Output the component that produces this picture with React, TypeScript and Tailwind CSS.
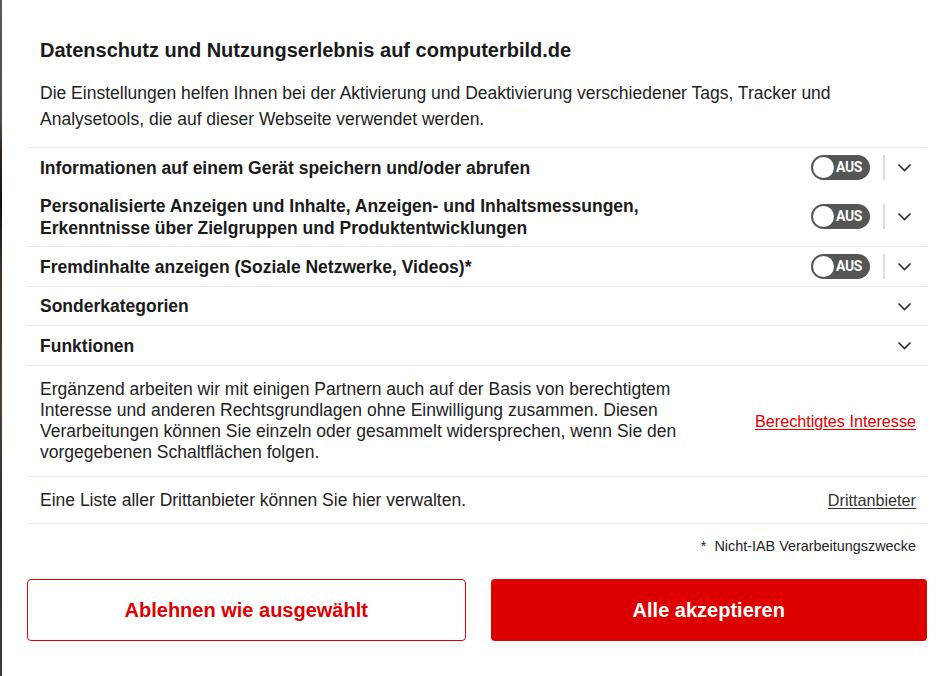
import React from 'react'

const Chevron = () => (
   <svg width="15" height="9" viewBox="0 0 15 9" fill="none">
      <path d="M1.5 1.5l6 6 6-6" stroke="#2a2a2a" strokeWidth="1.6" />
   </svg>
)

const Toggle = () => (
   <div className="flex items-center">
      <div className="relative w-[59px] h-[25px] rounded-full bg-[#555555]">
         <span className="absolute left-[2px] top-[2px] w-[21px] h-[21px] rounded-full bg-white"></span>
         <span className="absolute left-[25px] top-0 h-[25px] leading-[25px] text-[14px] tracking-[-0.4px] font-bold text-white font-['Roboto',sans-serif]">AUS</span>
      </div>
      <div className="w-[2px] h-[25px] bg-[#dddddd] ml-[13px] mr-[12px]"></div>
   </div>
)

const Row = ({ label, toggle, cls }: { label: React.ReactNode, toggle?: boolean, cls: string }) => {
   return (
      <div className={'flex items-center justify-between pl-[13px] pr-[15px] ' + cls}>
         <p className="text-[17.5px] leading-[22px] font-bold text-[#1a1a1a]">{label}</p>
         <div className="flex items-center">
            {toggle && <Toggle />}
            <Chevron />
         </div>
      </div>
   )
}

export default function App() {
   return (
      <div className="flex w-[949px] h-[676px] bg-white overflow-hidden font-['Liberation_Sans',Arial,sans-serif]">
         <div className="w-[2px] h-full bg-[linear-gradient(180deg,#5a5a5a_0%,#4a4a4a_18%,#3a2418_22%,#111_30%,#3d3426_40%,#4a4232_60%,#2f2f2f_75%,#3a3a3a_100%)]"></div>
         <div className="flex-1 flex flex-col pl-[25px] pr-[22px]">
            <div className="px-[13px] pt-[38px]">
               <h1 className="text-[20px] leading-[24px] font-bold text-[#1a1a1a]">Datenschutz und Nutzungserlebnis auf computerbild.de</h1>
               <p className="mt-[18px] text-[17.5px] leading-[26px] text-[#222222]">
                  Die Einstellungen helfen Ihnen bei der Aktivierung und Deaktivierung verschiedener Tags, Tracker und Analysetools, die auf dieser Webseite verwendet werden.
               </p>
            </div>
            <div className="mt-[15px]">
               <Row cls="h-[40px] border-t border-[#e6e6e6]" toggle label="Informationen auf einem Gerät speichern und/oder abrufen" />
               <Row cls="h-[59px]" toggle label={<>Personalisierte Anzeigen und Inhalte, Anzeigen- und Inhaltsmessungen,<br />Erkenntnisse über Zielgruppen und Produktentwicklungen</>} />
               <Row cls="h-[40px] border-t border-[#e6e6e6]" toggle label="Fremdinhalte anzeigen (Soziale Netzwerke, Videos)*" />
               <Row cls="h-[39px] border-t border-[#e6e6e6]" label="Sonderkategorien" />
               <Row cls="h-[40px] border-t border-[#e6e6e6]" label="Funktionen" />
               <div className="h-[111px] flex items-center justify-between border-t border-[#e6e6e6] pl-[13px] pr-[11px]">
                  <p className="w-[660px] text-[17.5px] leading-[21px] text-[#222222]">
                     Ergänzend arbeiten wir mit einigen Partnern auch auf der Basis von berechtigtem Interesse und anderen Rechtsgrundlagen ohne Einwilligung zusammen. Diesen Verarbeitungen können Sie einzeln oder gesammelt widersprechen, wenn Sie den vorgegebenen Schaltflächen folgen.
                  </p>
                  <a className="text-[16.2px] text-[#e00000] underline underline-offset-2">Berechtigtes Interesse</a>
               </div>
               <div className="h-[47px] flex items-center justify-between border-t border-[#e6e6e6] pl-[13px] pr-[11px]">
                  <p className="text-[17.5px] text-[#222222]">Eine Liste aller Drittanbieter können Sie hier verwalten.</p>
                  <a className="text-[16.2px] text-[#333333] underline underline-offset-2">Drittanbieter</a>
               </div>
               <div className="border-t border-[#e6e6e6] pl-[13px] pr-[11px] pt-[13px] flex justify-end">
                  <p className="text-[14.4px] leading-[18px] text-[#222222]">*&nbsp; Nicht-IAB Verarbeitungszwecke</p>
               </div>
            </div>
            <div className="mt-[24px] flex gap-[25px]">
               <button className="flex-1 h-[62px] rounded-[4px] border border-[#dd0000] bg-white text-[20px] font-bold text-[#dd0000]">Ablehnen wie ausgewählt</button>
               <button className="flex-1 h-[62px] rounded-[4px] bg-[#dd0000] text-[20px] font-bold text-white">Alle akzeptieren</button>
            </div>
         </div>
      </div>
   )
}
